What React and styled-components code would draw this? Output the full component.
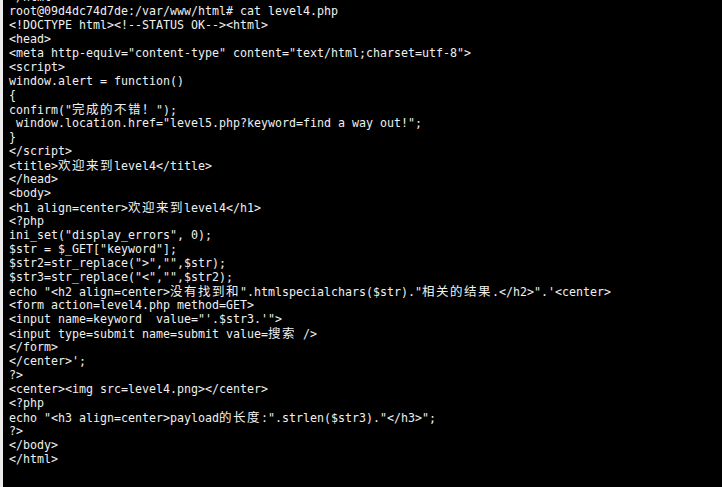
import React from "react";
import styled, { createGlobalStyle } from "styled-components";

const Global = createGlobalStyle`
  html, body { margin: 0; padding: 0; background: #000; }
  body { width: 722px; height: 487px; overflow: hidden; }
`;

const Terminal = styled.div`
  box-sizing: border-box;
  width: 722px;
  height: 487px;
  overflow: hidden;
  background: #000;
  border-left: 3px solid #ececec;
  padding-left: 6px;
`;

const Scroll = styled.div`
  margin-top: -10px;
  display: flex;
  flex-direction: column;
`;

const Line = styled.div`
  height: 14px;
  line-height: 14px;
  white-space: pre;
  color: #f0f0f0;
  font-family: "DejaVu Sans Mono", "Liberation Mono", monospace;
  font-size: 11.63px;
`;

const Wide = styled.span`
  font-family: "Noto Sans CJK SC", "DejaVu Sans Mono", sans-serif;
  font-size: 12.5px;
  letter-spacing: 1.5px;
  line-height: 14px;
`;

const lines = [
  "</html>",
  "root@09d4dc74d7de:/var/www/html# cat level4.php",
  "<!DOCTYPE html><!--STATUS OK--><html>",
  "<head>",
  '<meta http-equiv="content-type" content="text/html;charset=utf-8">',
  "<script>",
  "window.alert = function()",
  "{",
  'confirm("完成的不错！");',
  ' window.location.href="level5.php?keyword=find a way out!";',
  "}",
  "</script>",
  "<title>欢迎来到level4</title>",
  "</head>",
  "<body>",
  "<h1 align=center>欢迎来到level4</h1>",
  "<?php",
  'ini_set("display_errors", 0);',
  '$str = $_GET["keyword"];',
  '$str2=str_replace(">","",$str);',
  '$str3=str_replace("<","",$str2);',
  'echo "<h2 align=center>没有找到和".htmlspecialchars($str)."相关的结果.</h2>".\'<center>',
  "<form action=level4.php method=GET>",
  "<input name=keyword  value=\"'.$str3.'\">",
  "<input type=submit name=submit value=搜索 />",
  "</form>",
  "</center>';",
  "?>",
  "<center><img src=level4.png></center>",
  "<?php",
  'echo "<h3 align=center>payload的长度:".strlen($str3)."</h3>";',
  "?>",
  "</body>",
  "</html>",
];

const wideRe = /[\u3000-\u9fff\uff00-\uffef]+/g;

function renderLine(text) {
  const parts = [];
  let last = 0;
  let m;
  wideRe.lastIndex = 0;
  while ((m = wideRe.exec(text)) !== null) {
    if (m.index > last) parts.push(text.slice(last, m.index));
    parts.push(<Wide key={m.index}>{m[0]}</Wide>);
    last = m.index + m[0].length;
  }
  if (last < text.length) parts.push(text.slice(last));
  return parts;
}

export default function App() {
  return (
    <>
      <Global />
      <Terminal>
        <Scroll>
          {lines.map((l, i) => (
            <Line key={i}>{renderLine(l)}</Line>
          ))}
        </Scroll>
      </Terminal>
    </>
  );
}
